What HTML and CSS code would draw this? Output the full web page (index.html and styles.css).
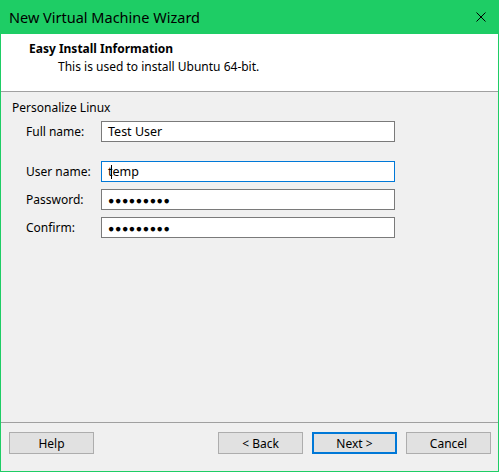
FILE: index.html
```html
<!DOCTYPE html>
<html>
<head>
<meta charset="utf-8">
<link rel="stylesheet" href="styles.css">
</head>
<body>
<div class="window">
  <div class="titlebar">
    <span class="title">New Virtual Machine Wizard</span>
    <svg class="close" width="10" height="10" viewBox="0 0 10 10"><path d="M0.5 0.5 L9.5 9.5 M9.5 0.5 L0.5 9.5" stroke="#000" stroke-width="1" fill="none"/></svg>
  </div>
  <div class="header">
    <div class="h-title">Easy Install Information</div>
    <div class="h-sub">This is used to install Ubuntu 64-bit.</div>
  </div>
  <div class="content">
    <div class="group-label">Personalize Linux</div>
    <div class="form">
      <label class="lbl">Full name:</label>
      <div class="field">Test User</div>
      <label class="lbl gap">User name:</label>
      <div class="field focus gap">t<span class="caret"></span>emp</div>
      <label class="lbl">Password:</label>
      <div class="field pw">●●●●●●●●●</div>
      <label class="lbl">Confirm:</label>
      <div class="field pw">●●●●●●●●●</div>
    </div>
  </div>
  <div class="footer">
    <button class="btn">Help</button>
    <div class="spacer"></div>
    <button class="btn">&lt; Back</button>
    <button class="btn primary">Next &gt;</button>
    <button class="btn">Cancel</button>
  </div>
</div>
</body>
</html>
```
FILE: styles.css
```css
html, body {
  margin: 0;
  padding: 0;
}
body {
  font-family: "Noto Sans", "Open Sans", sans-serif;
  font-size: 12px;
  color: #000;
  background: #f0f0f0;
}
.window {
  width: 499px;
  height: 472px;
  box-sizing: border-box;
  border: 1px solid #1ecd65;
  border-top: none;
  background: #f0f0f0;
  display: flex;
  flex-direction: column;
}
.titlebar {
  height: 34px;
  background: #1ecd65;
  display: flex;
  align-items: center;
  padding-left: 9px;
  padding-right: 13px;
  margin: 0 -1px;
}
.title {
  font-size: 14.5px;
  color: #000;
  flex: 1;
  padding-bottom: 1px;
}
.close {
  display: block;
}
.header {
  height: 57px;
  background: #fff;
  border-bottom: 1px solid #a0a0a0;
  box-sizing: content-box;
  padding-left: 28px;
}
.h-title {
  font-weight: bold;
  margin-top: 7px;
  line-height: 16px;
}
.h-sub {
  padding-left: 29px;
  line-height: 17px;
  margin-top: 1px;
}
.content {
  flex: 1;
  padding-left: 11px;
}
.group-label {
  margin-top: 8px;
  line-height: 16px;
}
.form {
  display: grid;
  grid-template-columns: 75px 294px;
  row-gap: 7px;
  margin-left: 14px;
  margin-top: 5px;
}
.lbl {
  display: flex;
  align-items: center;
  height: 21px;
}
.gap {
  margin-top: 12px;
}
.field {
  height: 21px;
  box-sizing: border-box;
  border: 1px solid #7a7a7a;
  background: #fff;
  padding-left: 6px;
  display: flex;
  align-items: center;
  font-size: 12.5px;
}
.field.focus {
  border-color: #0078d7;
}
.caret {
  display: inline-block;
  width: 1px;
  height: 14px;
  background: #000;
  margin-left: -2px;
  margin-right: 1px;
}
.pw {
  font-size: 10.5px;
  letter-spacing: 0.6px;
}
.footer {
  height: 39px;
  border-top: 1px solid #a0a0a0;
  display: flex;
  align-items: flex-start;
  padding: 9px 7px 0 8px;
  gap: 9px;
}
.spacer {
  flex: 1;
}
.btn {
  width: 85px;
  height: 22px;
  box-sizing: border-box;
  background: #e1e1e1;
  border: 1px solid #adadad;
  font-family: inherit;
  font-size: 12px;
  color: #000;
  padding: 0;
  margin: 0;
}
.btn.primary {
  border: 2px solid #0078d7;
}
```
